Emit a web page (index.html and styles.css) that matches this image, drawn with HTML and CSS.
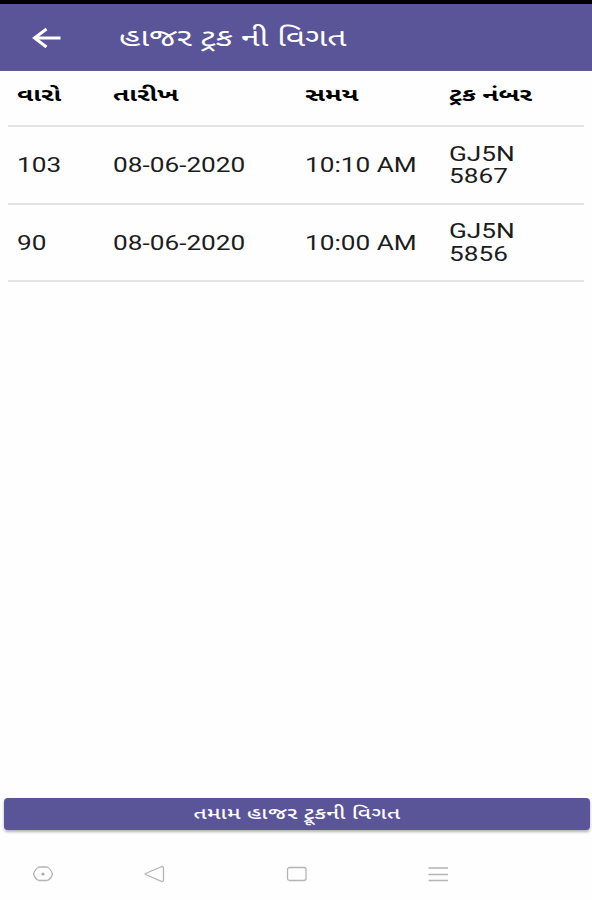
FILE: index.html
```html
<!DOCTYPE html>
<html lang="gu">
<head>
<meta charset="utf-8">
<title>હાજર ટ્રક ની વિગત</title>
<link rel="stylesheet" href="styles.css">
</head>
<body>
<div class="screen">
  <header class="app-bar">
    <svg class="back" width="30" height="22" viewBox="0 0 30 22"><path d="M28.500 11H2.500M14.500 2L2.500 11L14.500 20"/></svg>
    <h1 class="title"><span class="wide">હાજર ટ્રક ની વિગત</span></h1>
  </header>
  <main class="table">
    <div class="row head">
      <div><span class="wide">વારો</span></div>
      <div><span class="wide">તારીખ</span></div>
      <div><span class="wide">સમય</span></div>
      <div><span class="wide">ટ્રક નંબર</span></div>
    </div>
    <div class="row">
      <div><span class="wide">103</span></div>
      <div><span class="wide">08-06-2020</span></div>
      <div><span class="wide">10:10 AM</span></div>
      <div><span class="wide">GJ5N<br>5867</span></div>
    </div>
    <div class="row">
      <div><span class="wide">90</span></div>
      <div><span class="wide">08-06-2020</span></div>
      <div><span class="wide">10:00 AM</span></div>
      <div><span class="wide">GJ5N<br>5856</span></div>
    </div>
  </main>
  <button class="action"><span class="wide">તમામ હાજર ટ્રૂકની વિગત</span></button>
  <nav class="nav-bar">
    <svg width="22" height="16" viewBox="0 0 22 16"><path d="M7 1H15Q19 3 20.500 8Q19 13 15 14.500H7Q3 13 1.500 8Q3 3 7 1Z"/><circle class="dot" cx="11" cy="8" r="1.600"/></svg>
    <svg width="22" height="18" viewBox="0 0 22 18"><path d="M18 1.500L1.500 8.500Q.5 9 1.500 9.500L18 16.500Q19.500 16.500 19.500 15V3Q19.500 1.500 18 1.500Z"/></svg>
    <svg width="22" height="16" viewBox="0 0 22 16"><rect x="1.500" y="1.500" width="18.500" height="13" rx="2"/></svg>
    <svg width="22" height="16" viewBox="0 0 22 16"><path d="M.5 2H20M.5 8.500H20M.5 14.500H20"/></svg>
  </nav>
</div>
</body>
</html>
```
FILE: styles.css
```css
* { box-sizing: border-box; }
body { margin: 0; background: #fff; font-family: Roboto, "Noto Sans Gujarati", "Noto Sans", sans-serif; color: #1c1c1c; }
.screen { height: 900px; display: flex; flex-direction: column; border-top: 4px solid #000; background: #fefefe; }
.wide { display: inline-block; white-space: nowrap; transform: scaleX(1.31); transform-origin: left center; }
.app-bar { height: 67px; flex: none; display: flex; align-items: center; background: #5a5499; border-bottom: 1px solid #5f5a91; padding: 2px 0 0 32px; }
.back { fill: none; stroke: #fff; stroke-width: 3; }
.title { margin: 0 0 0 57px; font-size: 24px; line-height: 30px; font-weight: 400; color: #fff; }
.title .wide { transform: scaleX(1.405); }
.table { flex: 1; padding: 0 8px; }
.row { display: grid; grid-template-columns: 96px 192px 144px 1fr; align-items: center; height: 77.500px; padding: 1px 0 0 9px; border-bottom: 2px solid #e3e3e3; font-size: 20px; line-height: 22.500px; }
.head { height: 56px; padding: 0 0 6px 9px; font-size: 18.500px; font-weight: 700; color: #000; }
.head .wide { transform: scaleX(1.42); }
.action { flex: none; height: 32px; margin: 0 2.500px 0 4px; border: 0; border-radius: 4px; background: #5a5499; color: #fff; font: 500 16px/20px Roboto, "Noto Sans Gujarati", "Noto Sans", sans-serif; box-shadow: 0 2px 3px rgba(0, 0, 0, .3); padding: 0; }
.action .wide { transform: scaleX(1.4); transform-origin: center; letter-spacing: .3px; }
.nav-bar { height: 70px; flex: none; display: grid; grid-template-columns: 112px 142px 142px 1fr; align-items: center; padding: 18px 0 0 32px; }
.nav-bar svg { fill: none; stroke: #b4b4b4; stroke-width: 1.300; }
.nav-bar .dot { fill: #aaa; stroke: none; }
```
